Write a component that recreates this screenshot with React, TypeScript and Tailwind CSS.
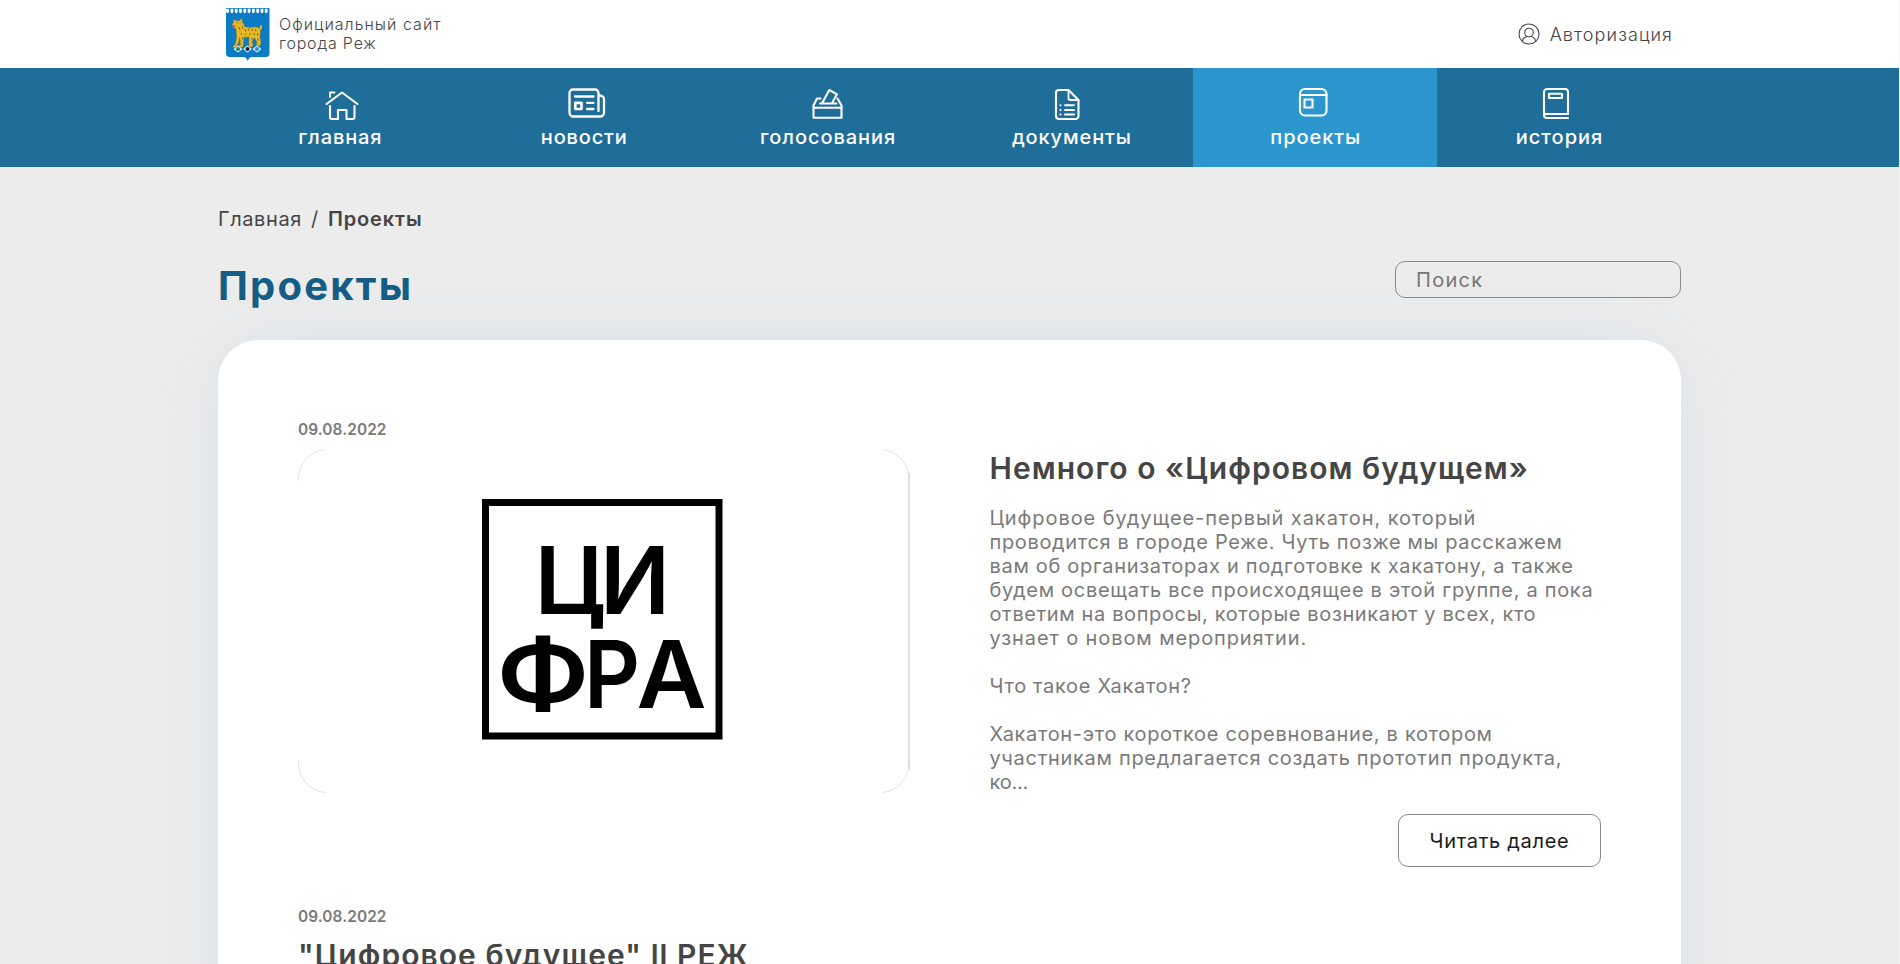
import type { ReactNode } from "react";

function Crest() {
  return (
    <svg className="mt-[2px] h-[54px] w-[44px]" viewBox="0 0 44 54">
      <path d="M0 0h43.500v45.500c0 2.500-1.500 3.500-4 3.500H26c-2 0-3 1-4.200 4C20.500 50 19.500 49 17.500 49H4c-2.500 0-4-1-4-3.500Z" fill="#0b7cc4" />
      {[1.6, 5.900, 10.200, 14.500, 18.800, 23.100, 27.400, 31.700, 36, 40.200].map((x) => (
        <path key={x} d={`M${x - 1.400} .8h2.800v3.400l-1.400 1-1.400-1Z`} fill="#fff" />
      ))}
      <path
        d="M7.800 10.800l2.700 2.200 2.500-.3 3-2.200.2 4c1 1 1.600 2.300 2.200 3.900 3.500 1 6 .5 9 .2 4-.3 6.500 1.500 6.700 5 .1 2.700-1 4-.6 6l.9 6.800h-3.800l-.4-5.600-2.400-3.400-.8 3.200 1.300 4.500-.2 1.500h-3.600l-.6-4.700.4-4.700c-2 .5-4 .5-5.600 0l.2 4.400-.9 6.300h-4.600l.8-1.800.6-4.600-1.600-4-.6 6-1 4.500H7.300"
        fill="none"
      />
      <path
        d="M7.800 11l2.400 1.800 3-.1 2.900-2.400.3 4.200c1.300 1.300 2 2.800 2.500 4.200 3.300 1 6.300.7 9.300.3 3.800-.4 6.300 1.600 6.300 4.900 0 2.600-1 4.200-.5 6.200l1 3.400-.6 4.300h-4l.5-4.100-2.600-3.900-2.200 3.400 1 4-.5 1.600h-3.700l-.1-5.400.4-4.400c-1.800.4-3.700.4-5.400 0l-.1 4.200-.8 6h-4.700l.4-1.500 1.700-.9-.1-4.300-.6-3-1 5-2.400 4.700-3.500.3.400-1.600 2.200-1.700 1.300-6.200-.4-6.200-.4-3.200-2.800-1-.8-3.300 1.400-2Z"
        fill="#e6b822"
        stroke="#8a6f22"
        strokeWidth=".4"
      />
      <path d="M32.500 22l2.700-2-.4-2.600" fill="none" stroke="#e6b822" strokeWidth="2" strokeLinejoin="round" />
      <path d="M13 19l1 3M16 18l.8 3M19 21l.6 2.500M22.500 20.500l.4 2.500M26 20.500l.5 2.500M29.500 21l.4 2.500M15 25l.8 2M19 25.500l.5 1.500M24 25.500l-.4 1.600M28 25l.5 2.200M31.500 25v2.500M16.500 29.500v2M26 30v2M32 30.500v2M10.500 14.800h1.200M13.700 14.800h1" stroke="#6d5316" strokeWidth=".8" />
      <path d="M7 17.300l2.400.4-.5 1.500-1.500-.2Z" fill="#d2322a" />
      {[
        [12, "#1c8a4c"],
        [21.500, "#15202b"],
        [31, "#1f8fd6"],
      ].map(([x, c]) => (
        <g key={x} transform={`translate(${x} 41)`}>
          <path d="M-4.400 0-1.500-2.600 0-3.600l1.500 1L4.400 0 1.500 2.600 0 3.600l-1.500-1Z" fill="#d5e6f2" />
          <circle r="2" fill={c as string} />
        </g>
      ))}
    </svg>
  );
}

function Icon({ children }: { children: ReactNode }) {
  return (
    <svg
      className="h-10 w-11"
      viewBox="0 0 44 40"
      fill="none"
      stroke="#fff"
      strokeWidth="2.100"
      strokeLinecap="round"
      strokeLinejoin="round"
    >
      {children}
    </svg>
  );
}

const NAV = [
  {
    label: "главная",
    tracking: "tracking-[0.9px]",
    icon: (
      <Icon>
        <path d="M8.500 20 24 8.500 39.500 20" />
        <path d="M12 13V8.500h4.500" strokeWidth="1.800" />
        <path d="M12 22v11a2 2 0 0 0 2 2h6v-9h8.500v9h6a2 2 0 0 0 2-2V22" />
      </Icon>
    ),
  },
  {
    label: "новости",
    tracking: "tracking-[0.85px]",
    icon: (
      <Icon>
        <path d="M36.500 27V9a3.500 3.500 0 0 0-3.500-3.500H11A3.500 3.500 0 0 0 7.500 9v19.500a4 4 0 0 0 4 4H38a4 4 0 0 0 4-4V15.500a4 4 0 0 0-4-4h-1.500" strokeWidth="2.300" />
        <path d="M13 12.500h18.500M25 18.800h6.500M25 25h6.500" strokeWidth="2.300" />
        <path d="M13.300 18.800h6.200V25h-6.200Z" strokeWidth="2.700" />
      </Icon>
    ),
  },
  {
    label: "голосования",
    tracking: "tracking-[0.94px]",
    icon: (
      <Icon>
        <path d="M7.500 23.700h28v10h-28Z" />
        <path d="M7.500 23.500v-2l3.500-7h3.500M31.500 14.500l4 7v2" />
        <path d="M14 19.500h16.500" strokeWidth="1.800" />
        <path d="M16.500 18.500 23.300 6l7.700 4.300-4.500 8" />
      </Icon>
    ),
  },
  {
    label: "документы",
    tracking: "tracking-[0.88px]",
    icon: (
      <Icon>
        <path d="M19.500 6H10a3 3 0 0 0-3 3v23a3 3 0 0 0 3 3h16.500a3 3 0 0 0 3-3V16Z" />
        <path d="M19.500 6v8a2 2 0 0 0 2 2h8" strokeWidth="1.800" />
        <path d="M16 21.200h9M16 26h9M16 30.500h9M11.400 21.200h.2M11.400 26h.2M11.400 30.500h.2" strokeWidth="1.900" />
      </Icon>
    ),
  },
  {
    label: "проекты",
    tracking: "tracking-[0.95px]",
    active: true,
    icon: (
      <Icon>
        <rect x="7" y="5" width="26.500" height="26.500" rx="5" />
        <path d="M7 11h26.500" />
        <path d="M11.500 15.500h8v8h-8Z" strokeLinejoin="miter" />
      </Icon>
    ),
  },
  {
    label: "история",
    tracking: "tracking-[1px]",
    icon: (
      <Icon>
        <path d="M31 34H10a3 3 0 0 1-3-3V8a3 3 0 0 1 3-3h18a3 3 0 0 1 3 3v22" />
        <path d="M7.500 30H31" />
        <path d="M12 9.800h13v4.200H12Z" />
      </Icon>
    ),
  },
];

const BODY: [string, string][] = [
  ["Цифровое будущее-первый хакатон, который", "tracking-[0.93px]"],
  ["проводится в городе Реже. Чуть позже мы расскажем", "tracking-[0.66px]"],
  ["вам об организаторах и подготовке к хакатону, а также", "tracking-[0.68px]"],
  ["будем освещать все происходящее в этой группе, а пока", "tracking-[0.7px]"],
  ["ответим на вопросы, которые возникают у всех, кто", "tracking-[0.63px]"],
  ["узнает о новом мероприятии.", "tracking-[0.9px]"],
  ["", ""],
  ["Что такое Хакатон?", "tracking-[0.68px]"],
  ["", ""],
  ["Хакатон-это короткое соревнование, в котором", "tracking-[0.68px]"],
  ["участникам предлагается создать прототип продукта,", "tracking-[0.7px]"],
  ["ко...", "-tracking-[0.2px]"],
];

function Letter({ x, y, w, size, children }: { x: number; y: number; w: number; size: number; children: string }) {
  return (
    <text x={x} y={y} fontSize={size} textLength={w} lengthAdjust="spacingAndGlyphs">
      {children}
    </text>
  );
}

function Cover() {
  return (
    <svg className="mt-[9px] h-[344px] w-[612px] font-semibold" viewBox="0 0 612 344">
      <g fill="none" stroke="#e2e2e2">
        <path d="M.5 32V30A29.500 29.500 0 0 1 27 .5" />
        <path d="M585 .5A29.500 29.500 0 0 1 611 30" />
        <path d="M.5 311v3A29.500 29.500 0 0 0 27 343.500" />
        <path d="M585 343.500A29.500 29.500 0 0 0 611 314" />
      </g>
      <path d="M611 24v296" stroke="#cfcfcf" strokeWidth="1.300" />
      <rect x="187.500" y="53.500" width="233.500" height="233.500" fill="#fff" stroke="#000" strokeWidth="7" />
      <Letter x={236.500} y={164.700} w={71} size={94}>Ц</Letter>
      <Letter x={302} y={164.700} w={70} size={94}>И</Letter>
      <Letter x={198.500} y={259} w={93} size={94}>Ф</Letter>
      <Letter x={286} y={259} w={56} size={94}>Р</Letter>
      <Letter x={338.500} y={259} w={70} size={94}>А</Letter>
    </svg>
  );
}

export default function App() {
  return (
    <div className="h-[964px] overflow-hidden border-r border-[#f4f4f4] bg-[#ececec] font-[Inter,'Liberation_Sans',sans-serif] text-[#454545]">
      <header className="h-[68px] bg-white">
        <div className="mx-auto flex h-full w-[1463px] items-center justify-between px-[8px]">
          <div className="flex items-center gap-[9px]">
            <Crest />
            <div className="text-[16px] leading-[19.500px] font-light">
              <div className="tracking-[1.03px]">Официальный сайт</div>
              <div className="tracking-[0.8px]">города Реж</div>
            </div>
          </div>
          <div className="flex items-center gap-[10px]">
            <svg className="h-[22px] w-[22px]" viewBox="0 0 22 22" fill="none" stroke="#4a4a4a" strokeWidth="1.100">
              <circle cx="11" cy="11" r="10" />
              <circle cx="11" cy="9.500" r="4.300" />
              <path d="M4.200 18.300c.6-2.700 2.800-4.300 5-4.800M17.800 18.300c-.6-2.700-2.800-4.300-5-4.800" />
            </svg>
            <span className="text-[18px] font-light tracking-[1.1px]">Авторизация</span>
          </div>
        </div>
      </header>

      <nav className="h-[99px] bg-[#1f6d99]">
        <div className="mx-auto grid h-full w-[1463px] grid-cols-6">
          {NAV.map((item) => (
            <a
              key={item.label}
              className={
                item.active
                  ? "flex flex-col items-center bg-[#2c97cf] pt-4"
                  : "flex flex-col items-center pt-4"
              }
            >
              {item.icon}
              <span className={`mt-px pl-px text-[20px] leading-6 font-medium text-white ${item.tracking}`}>{item.label}</span>
            </a>
          ))}
        </div>
      </nav>

      <main className="mx-auto w-[1463px] pt-10">
        <div className="flex text-[20px] leading-6">
          <span className="w-[93px] tracking-[0.6px]">Главная</span>
          <span className="w-[17px]">/</span>
          <span className="font-semibold tracking-[0.85px]">Проекты</span>
        </div>

        <div className="mt-[30px] flex items-start justify-between">
          <h1 className="mt-px text-[40px] leading-[48px] font-bold tracking-[2.200px] text-[#155d85]">Проекты</h1>
          <input
            placeholder="Поиск"
            className="h-[37px] w-[286px] rounded-[10px] border border-[#8a8a8a] bg-transparent px-[20px] text-[20px] tracking-[1.300px] placeholder:text-[#757575]"
          />
        </div>

        <section className="mt-[30px] h-[700px] rounded-[40px] bg-white px-20 pt-20 shadow-[0_0_75px_rgba(11,111,211,0.08)]">
          <article className="grid grid-cols-2 gap-x-20">
            <div>
              <div className="text-[15.4px] leading-5 font-semibold tracking-[0.1px] text-[#7a7a7a]">09.08.2022</div>
              <Cover />
            </div>
            <div className="pt-[30px]">
              <h2 className="text-[30px] leading-9 font-semibold tracking-[1.050px] whitespace-nowrap">
                Немного о «Цифровом будущем»
              </h2>
              <div className="mt-5 text-[20px] leading-6 whitespace-nowrap text-[#7a7a7a]">
                {BODY.map(([text, tracking], i) => (
                  <div key={i} className={`h-6 ${tracking}`}>
                    {text}
                  </div>
                ))}
              </div>
              <div className="mt-5 flex justify-end">
                <button className="h-[53px] w-[203px] rounded-[10px] border border-[#8a8a8a] pt-px text-[20px] tracking-[0.700px] text-[#1c1c1c]">
                  Читать далее
                </button>
              </div>
            </div>
          </article>
          <article className="mt-[40px]">
            <div className="text-[15.4px] leading-5 font-semibold tracking-[0.1px] text-[#7a7a7a]">09.08.2022</div>
            <h2 className="mt-[10px] text-[30px] leading-9 font-semibold tracking-[1.050px] whitespace-nowrap">
              "Цифровое будущее" ll РЕЖ
            </h2>
          </article>
        </section>
      </main>
    </div>
  );
}
